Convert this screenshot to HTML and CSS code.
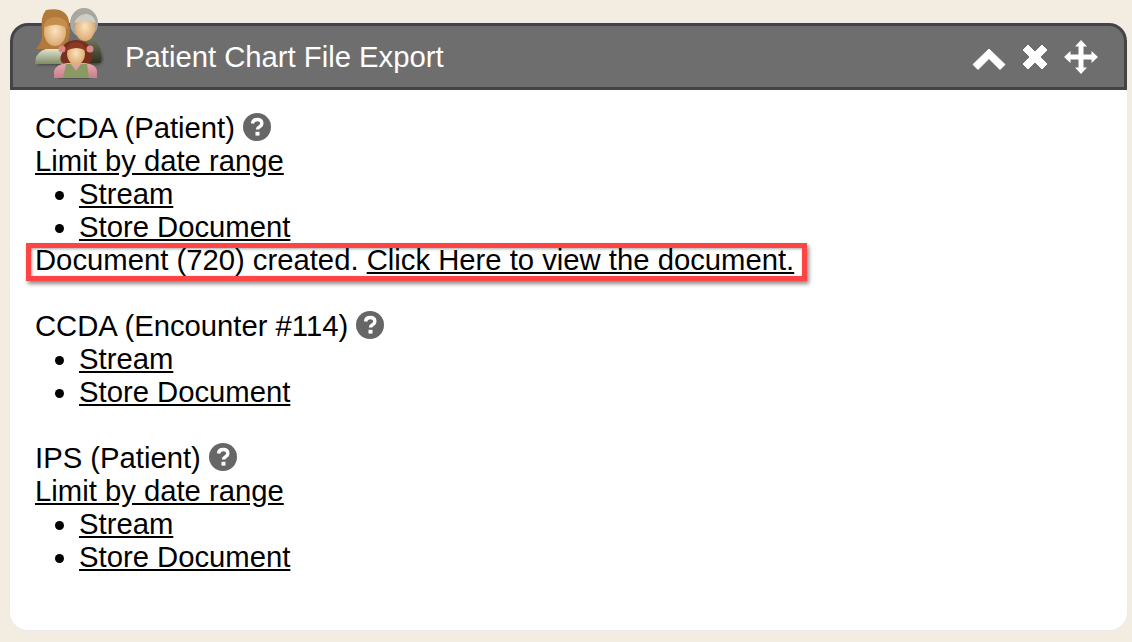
FILE: index.html
```html
<!DOCTYPE html>
<html lang="en">
<head>
  <meta charset="UTF-8">
  <title>Patient Chart File Export</title>
  <link rel="stylesheet" href="styles.css">
</head>
<body>

  <section class="panel">
    <header class="panel-head">
      <svg class="logo" viewBox="0 0 70 72" aria-hidden="true">
        <defs>
          <filter id="soft"><feGaussianBlur stdDeviation="0.7"/></filter>
          <filter id="shade"><feGaussianBlur stdDeviation="1.6"/></filter>
          <radialGradient id="skin" cx="0.5" cy="0.45" r="0.6">
            <stop offset="0" stop-color="#fbe3bd"/>
            <stop offset="1" stop-color="#d8a56b"/>
          </radialGradient>
          <linearGradient id="shirt" x1="0" y1="0" x2="0" y2="1">
            <stop offset="0" stop-color="#e7ead9"/>
            <stop offset="1" stop-color="#7f8b62"/>
          </linearGradient>
          <linearGradient id="dark" x1="0" y1="0" x2="0" y2="1">
            <stop offset="0" stop-color="#77775c"/>
            <stop offset="1" stop-color="#2f2f24"/>
          </linearGradient>
          <linearGradient id="kid" x1="0" y1="0" x2="0" y2="1">
            <stop offset="0" stop-color="#e9a9ad"/>
            <stop offset="1" stop-color="#c77f8c"/>
          </linearGradient>
        </defs>
        <g filter="url(#shade)" opacity="0.6" transform="translate(2 2)">
          <path d="M2 56 Q3 42 20 40 L50 36 Q66 38 67 52 L62 56 L54 56 L54 70 L22 70 L22 56 Z" fill="#222"/>
        </g>
        <g filter="url(#soft)">
          <path d="M42 34 Q46 30 54 31 Q66 34 67 46 L67 56 L44 56 Z" fill="url(#dark)"/>
          <ellipse cx="50" cy="16" rx="14" ry="15" fill="#a9a7a0"/>
          <ellipse cx="51" cy="21" rx="10" ry="13" fill="url(#skin)"/>
          <path d="M40 16 Q44 7 53 7 Q60 8 62 16 Q52 11 40 16Z" fill="#cfcdc7"/>
          <path d="M1 57 L2 50 Q6 42 17 41 L30 41 Q42 44 42 52 L42 57 Z" fill="url(#shirt)"/>
          <path d="M12 3 Q32 -1 35 14 Q37 26 34 34 L36 42 L10 42 L2 42 Q9 34 8 24 Q6 10 12 3Z" fill="#b27a37"/>
          <ellipse cx="21" cy="25" rx="11" ry="14" fill="url(#skin)"/>
          <path d="M9 21 Q12 9 23 10 Q33 11 34 22 Q23 14 9 21Z" fill="#c58f4c"/>
          <path d="M28 46 Q27 34 42 33 Q57 34 57 46 Q60 54 54 57 L30 57 Q24 54 28 46Z" fill="#7a2e1e"/>
          <circle cx="28" cy="42" r="3.500" fill="#d98a86"/>
          <circle cx="56" cy="42" r="3.500" fill="#d98a86"/>
          <path d="M20 71 L20 64 Q22 57 33 56 L51 56 Q62 57 63 64 L63 71 Z" fill="url(#kid)"/>
          <path d="M32 57 L37 57 L42 64 L47 57 L53 57 L55 71 L29 71 Z" fill="#8a9a62"/>
          <ellipse cx="42" cy="47" rx="9" ry="11" fill="url(#skin)"/>
          <path d="M32 44 Q34 35 42 35 Q50 35 52 44 Q43 38 32 44Z" fill="#8a3a22"/>
        </g>
      </svg>
      <h1 class="panel-title">Patient Chart File Export</h1>
      <div class="panel-tools">
        <svg class="tool tool-up" viewBox="0 0 34 24" aria-hidden="true">
          <path d="M1 18.500 L17 3 L33 18.500 L28 23.500 L17 12.500 L6 23.500 Z" fill="#fff" stroke="#fff" stroke-linejoin="round" stroke-width="1"/>
        </svg>
        <svg class="tool tool-x" viewBox="0 0 26 26" aria-hidden="true">
          <path d="M6 1 L13 8 L20 1 L25 6 L18 13 L25 20 L20 25 L13 18 L6 25 L1 20 L8 13 L1 6 Z" fill="#fff" stroke="#fff" stroke-linejoin="round" stroke-width="1"/>
        </svg>
        <svg class="tool tool-move" viewBox="0 0 34 34" aria-hidden="true">
          <path d="M17 0 L23 6.500 L19.500 6.500 L19.500 14.500 L27.500 14.500 L27.500 11 L34 17 L27.500 23 L27.500 19.500 L19.500 19.500 L19.500 27.500 L23 27.500 L17 34 L11 27.500 L14.500 27.500 L14.500 19.500 L6.500 19.500 L6.500 23 L0 17 L6.500 11 L6.500 14.500 L14.500 14.500 L14.500 6.500 L11 6.500 Z" fill="#fff"/>
        </svg>
      </div>
    </header>

    <div class="panel-body">
      <div class="doc-group">
        <div>CCDA (Patient) <svg class="help" viewBox="0 0 28 28" aria-hidden="true"><circle cx="14" cy="14" r="14" fill="#666"/><path d="M9.500 10.500 Q10 6.500 14.200 6.500 Q18.800 6.500 18.800 10.300 Q18.800 12.600 16.300 13.900 Q14.500 14.900 14.500 16.500" fill="none" stroke="#fff" stroke-width="3.400"/><rect x="12.500" y="18.800" width="4" height="3.800" fill="#fff"/></svg></div>
        <a href="#">Limit by date range</a>
        <ul class="doc-links">
          <li><a href="#">Stream</a></li>
          <li><a href="#">Store Document</a></li>
        </ul>
        <div class="created">Document (720) created. <a href="#">Click Here to view the document.</a></div>
      </div>

      <div class="doc-group">
        <div>CCDA (Encounter #114) <svg class="help" viewBox="0 0 28 28" aria-hidden="true"><circle cx="14" cy="14" r="14" fill="#666"/><path d="M9.500 10.500 Q10 6.500 14.200 6.500 Q18.800 6.500 18.800 10.300 Q18.800 12.600 16.300 13.900 Q14.500 14.900 14.500 16.500" fill="none" stroke="#fff" stroke-width="3.400"/><rect x="12.500" y="18.800" width="4" height="3.800" fill="#fff"/></svg></div>
        <ul class="doc-links">
          <li><a href="#">Stream</a></li>
          <li><a href="#">Store Document</a></li>
        </ul>
      </div>

      <div class="doc-group">
        <div>IPS (Patient) <svg class="help" viewBox="0 0 28 28" aria-hidden="true"><circle cx="14" cy="14" r="14" fill="#666"/><path d="M9.500 10.500 Q10 6.500 14.200 6.500 Q18.800 6.500 18.800 10.300 Q18.800 12.600 16.300 13.900 Q14.500 14.900 14.500 16.500" fill="none" stroke="#fff" stroke-width="3.400"/><rect x="12.500" y="18.800" width="4" height="3.800" fill="#fff"/></svg></div>
        <a href="#">Limit by date range</a>
        <ul class="doc-links">
          <li><a href="#">Stream</a></li>
          <li><a href="#">Store Document</a></li>
        </ul>
      </div>
    </div>
  </section>

</body>
</html>
```

FILE: styles.css
```css
* { box-sizing: border-box; margin: 0; padding: 0; }

body {
  font-family: 'Liberation Sans', Arial, sans-serif;
  font-size: 29.25px;
  line-height: 33px;
  color: #000;
  background: #f3ece0;
  padding: 23px 5px 12px 10px;
  height: 642px;
  overflow: hidden;
}

a {
  color: #000;
  text-decoration: underline;
}

.panel {
  height: 607px;
  background: #fff;
  border-radius: 18px;
  box-shadow: 0 0 0 1px #ecebf0;
}

.panel-head {
  position: relative;
  height: 67px;
  display: flex;
  align-items: center;
  background: #6e6e6e;
  border: 3px solid #444;
  border-radius: 18px 18px 0 0;
}

/* logo sticks out above the header */
.logo {
  position: absolute;
  left: 21px;
  top: -19px;
  width: 70px;
  height: 72px;
}

.panel-title {
  margin-left: 112px;
  padding-top: 2px;
  font-size: 29.25px;
  font-weight: normal;
  color: #fff;
}

.panel-tools {
  margin-left: auto;
  margin-right: 26px;
  display: flex;
  align-items: center;
  gap: 16px;
}

.tool { display: block; }
.tool-up { width: 34px; height: 24px; margin-top: 2px; }
.tool-x { width: 26px; height: 26px; }
.tool-move { width: 34px; height: 34px; }

.panel-body {
  padding: 22px 25px;
}

.doc-group {
  margin-bottom: 33px;
}

.doc-links {
  padding-left: 44px;
}

.help {
  width: 28px;
  height: 28px;
  vertical-align: -3px;
}

.created {
  position: relative;
  width: fit-content;
}

/* red annotation box round the message */
.created::after {
  content: "";
  position: absolute;
  left: -9px;
  right: -13px;
  top: -1px;
  bottom: -4px;
  border: 5px solid #ff4444;
  box-shadow: 2px 3px 4px rgba(0,0,0,0.45), inset 1px 1px 3px rgba(0,0,0,0.35);
}
```
